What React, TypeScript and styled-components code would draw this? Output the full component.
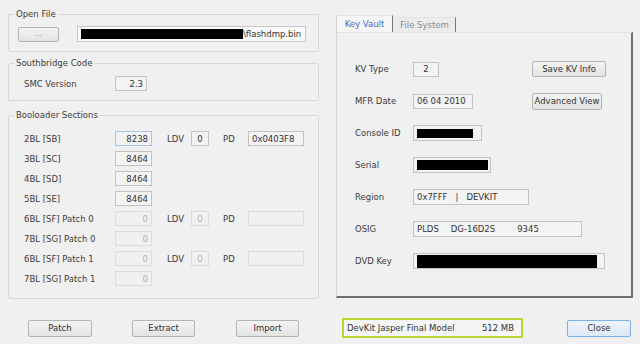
import React from 'react';
import styled, { createGlobalStyle } from 'styled-components';

const Global = createGlobalStyle`
  html, body { margin: 0; padding: 0; background: #f0f0f0; }
  body {
    font-family: "DejaVu Sans", Verdana, sans-serif;
    font-size: 8.5px;
    color: #3c3c3c;
  }
  * { box-sizing: border-box; }
`;

const Window = styled.div`
  width: 640px;
  height: 344px;
  overflow: hidden;
  background: #f0f0f0;
  display: flex;
  flex-direction: column;
  padding-top: 9px;
`;

const Main = styled.div`
  display: flex;
  height: 291px;
  padding-left: 8px;
  gap: 17px;
`;

const LeftCol = styled.div`
  width: 311px;
  display: flex;
  flex-direction: column;
  padding-top: 5px;
`;

const GroupBox = styled.section<{ $mt: number; $pb: number }>`
  margin-top: ${(p) => p.$mt}px;
  border: 1px solid #d8d8d8;
  border-radius: 2px;
  padding: 0 11px ${(p) => p.$pb}px 0;
  display: flex;
  flex-direction: column;
`;

const GroupTitle = styled.div`
  width: fit-content;
  margin: -6px 0 0 5px;
  padding: 0 2px;
  line-height: 10px;
  height: 10px;
  background: #f0f0f0;
  color: #3c3c3c;
  white-space: nowrap;
`;

const GroupBody = styled.div<{ $mt: number; $pl: number }>`
  margin-top: ${(p) => p.$mt}px;
  padding-left: ${(p) => p.$pl}px;
`;

const Row = styled.div`
  display: flex;
  align-items: center;
`;

const Button = styled.button<{ $w: number; $h?: number; $ml?: number; $primary?: boolean }>`
  width: ${(p) => p.$w}px;
  height: ${(p) => p.$h ?? 17}px;
  margin: 0 0 0 ${(p) => p.$ml ?? 0}px;
  padding: 0;
  font-family: "DejaVu Sans", Verdana, sans-serif;
  font-size: 8.5px;
  color: #333;
  border: 1px solid ${(p) => (p.$primary ? '#7db2e6' : '#b4b4b4')};
  border-radius: 2px;
  background: ${(p) =>
    p.$primary
      ? 'linear-gradient(#edf4fc, #dde9f7)'
      : 'linear-gradient(#f4f4f4, #e3e3e3)'};
  display: flex;
  align-items: center;
  justify-content: center;
  flex-shrink: 0;
`;

const DotsLabel = styled.span`
  color: #8a8a8a;
  font-size: 7px;
  letter-spacing: 0.5px;
`;

const PathBox = styled.div`
  margin-left: 18px;
  width: 229px;
  height: 16px;
  border: 1px solid #c6c6c6;
  background: #fafafa;
  display: flex;
  align-items: center;
  padding-left: 3px;
  white-space: nowrap;
  color: #333;
`;

const Redact = styled.span<{ $w: number; $h: number }>`
  display: inline-block;
  width: ${(p) => p.$w}px;
  height: ${(p) => p.$h}px;
  background: #000;
  flex-shrink: 0;
`;

const Label = styled.span<{ $w?: number; $pl?: number }>`
  display: inline-block;
  width: ${(p) => (p.$w ? `${p.$w}px` : 'auto')};
  padding-left: ${(p) => p.$pl ?? 0}px;
  white-space: nowrap;
  color: #3c3c3c;
`;

type BoxState = 'normal' | 'focus' | 'disabled';

const Field = styled.div<{ $w: number; $h?: number; $align?: string; $state?: BoxState; $span?: boolean }>`
  width: ${(p) => p.$w}px;
  height: ${(p) => p.$h ?? 15}px;
  border: 1px solid
    ${(p) =>
      p.$state === 'focus' ? '#a6c3e6' : p.$state === 'disabled' ? '#dcdcdc' : '#c3c3c3'};
  background: ${(p) => (p.$state === 'disabled' ? '#f0f0f0' : '#f3f3f3')};
  color: ${(p) => (p.$state === 'disabled' ? '#b0b0b0' : '#333')};
  display: flex;
  align-items: center;
  justify-content: ${(p) => p.$align ?? 'flex-end'};
  padding: 0 3px;
  white-space: pre;
  flex-shrink: 0;
  grid-column: ${(p) => (p.$span ? '2 / 4' : 'auto')};
`;

const BootGrid = styled.div`
  display: grid;
  grid-template-columns: 91px 37px 39px 18px 39px 56px;
  grid-auto-rows: 15px;
  row-gap: 5px;
  align-items: center;
`;

const EmptyCells = styled.span`
  grid-column: 3 / 7;
`;

const RightCol = styled.div`
  width: 297px;
  display: flex;
  flex-direction: column;
  padding-top: 6px;
`;

const TabStrip = styled.div`
  display: flex;
  align-items: flex-end;
  height: 17px;
`;

const Tab = styled.div<{ $active?: boolean; $w: number }>`
  width: ${(p) => p.$w}px;
  height: ${(p) => (p.$active ? 17 : 15)}px;
  display: flex;
  align-items: center;
  justify-content: center;
  color: ${(p) => (p.$active ? '#3d6fc4' : '#8c8c8c')};
  background: ${(p) => (p.$active ? '#f6f6f6' : '#ececec')};
  border-left: 1px solid ${(p) => (p.$active ? '#d4d4d4' : 'transparent')};
  border-top: 1px solid ${(p) => (p.$active ? '#e2e2e2' : '#e4e4e4')};
  border-right: 1px solid #777;
  white-space: nowrap;
`;

const Panel = styled.div`
  height: 266px;
  border-left: 1px solid #d6d6d6;
  border-top: 1px solid #e2e2e2;
  border-right: 2px solid #707070;
  border-bottom: 2px solid #707070;
  background: #f0f0f0;
  padding: 28px 0 0 18px;
  display: grid;
  grid-template-columns: 58px 119px auto;
  grid-auto-rows: 16px;
  row-gap: 16px;
  align-items: center;
  align-content: start;
`;

const Gap = styled.span<{ $w: number }>`
  display: inline-block;
  width: ${(p) => p.$w}px;
`;

const BottomBar = styled.div`
  margin-top: 18px;
  height: 20px;
  display: flex;
  align-items: center;
  padding-left: 28px;
`;

const Status = styled.div`
  margin-left: 43px;
  width: 181px;
  height: 20px;
  border: 2px solid #b6d634;
  background: #f5f5f5;
  display: flex;
  align-items: center;
  justify-content: space-between;
  padding: 0 7px 0 3px;
  color: #333;
  white-space: nowrap;
`;

const bootRows: {
  label: string;
  value: string;
  state: BoxState;
  ldv?: string;
  pd?: string;
}[] = [
  { label: '2BL [SB]', value: '8238', state: 'focus', ldv: '0', pd: '0x0403F8' },
  { label: '3BL [SC]', value: '8464', state: 'normal' },
  { label: '4BL [SD]', value: '8464', state: 'normal' },
  { label: '5BL [SE]', value: '8464', state: 'normal' },
  { label: '6BL [SF] Patch 0', value: '0', state: 'disabled', ldv: '0', pd: '' },
  { label: '7BL [SG] Patch 0', value: '0', state: 'disabled' },
  { label: '6BL [SF] Patch 1', value: '0', state: 'disabled', ldv: '0', pd: '' },
  { label: '7BL [SG] Patch 1', value: '0', state: 'disabled' },
];

export default function App() {
  return (
    <Window>
      <Global />
      <Main>
        <LeftCol>
          <GroupBox $mt={0} $pb={9}>
            <GroupTitle>Open File</GroupTitle>
            <GroupBody $mt={7} $pl={9}>
              <Row>
                <Button $w={41} $h={15}>
                  <DotsLabel>...</DotsLabel>
                </Button>
                <PathBox>
                  <Redact $w={162} $h={10} />
                  <span>\flashdmp.bin</span>
                </PathBox>
              </Row>
            </GroupBody>
          </GroupBox>

          <GroupBox $mt={11} $pb={9}>
            <GroupTitle>Southbridge Code</GroupTitle>
            <GroupBody $mt={8} $pl={15}>
              <Row>
                <Label $w={91}>SMC Version</Label>
                <Field $w={32}>2.3</Field>
              </Row>
            </GroupBody>
          </GroupBox>

          <GroupBox $mt={14} $pb={12}>
            <GroupTitle>Booloader Sections</GroupTitle>
            <GroupBody $mt={11} $pl={15}>
              <BootGrid>
                {bootRows.map((r) => (
                  <React.Fragment key={r.label}>
                    <Label>{r.label}</Label>
                    <Field $w={37} $state={r.state}>
                      {r.value}
                    </Field>
                    {r.ldv !== undefined ? (
                      <>
                        <Label $pl={15}>LDV</Label>
                        <Field
                          $w={18}
                          $align="center"
                          $state={r.state === 'disabled' ? 'disabled' : 'normal'}
                        >
                          {r.ldv}
                        </Field>
                        <Label $pl={14}>PD</Label>
                        <Field
                          $w={56}
                          $align="flex-start"
                          $state={r.state === 'disabled' ? 'disabled' : 'normal'}
                        >
                          {r.pd}
                        </Field>
                      </>
                    ) : (
                      <EmptyCells />
                    )}
                  </React.Fragment>
                ))}
              </BootGrid>
            </GroupBody>
          </GroupBox>
        </LeftCol>

        <RightCol>
          <TabStrip>
            <Tab $active $w={57}>Key Vault</Tab>
            <Tab $w={63}>File System</Tab>
          </TabStrip>
          <Panel>
            <Label>KV Type</Label>
            <Field $w={26} $align="center">2</Field>
            <Button $w={74} $h={16}>Save KV Info</Button>

            <Label>MFR Date</Label>
            <Field $w={60} $align="flex-start">06 04 2010</Field>
            <Button $w={70} $h={17}>Advanced View</Button>

            <Label>Console ID</Label>
            <Field $w={69} $h={16} $align="flex-start">
              <Redact $w={56} $h={9} />
            </Field>
            <span />

            <Label>Serial</Label>
            <Field $w={78} $h={16} $align="flex-start">
              <Redact $w={71} $h={10} />
            </Field>
            <span />

            <Label>Region</Label>
            <Field $w={116} $h={16} $align="flex-start">
              <span>0x7FFF</span>
              <Gap $w={8} />
              <span>|</span>
              <Gap $w={8} />
              <span>DEVKIT</span>
            </Field>
            <span />

            <Label>OSIG</Label>
            <Field $w={169} $h={16} $align="flex-start">
              <span>PLDS</span>
              <Gap $w={12} />
              <span>DG-16D2S</span>
              <Gap $w={22} />
              <span>9345</span>
            </Field>
            <span />

            <Label>DVD Key</Label>
            <Field $w={192} $h={16} $align="flex-start" $span>
              <Redact $w={180} $h={13} />
            </Field>
          </Panel>
        </RightCol>
      </Main>

      <BottomBar>
        <Button $w={64}>Patch</Button>
        <Button $w={63} $ml={40}>Extract</Button>
        <Button $w={63} $ml={41}>Import</Button>
        <Status>
          <span>DevKit Jasper Final Model</span>
          <span>512 MB</span>
        </Status>
        <Button $w={64} $ml={44} $primary>Close</Button>
      </BottomBar>
    </Window>
  );
}
